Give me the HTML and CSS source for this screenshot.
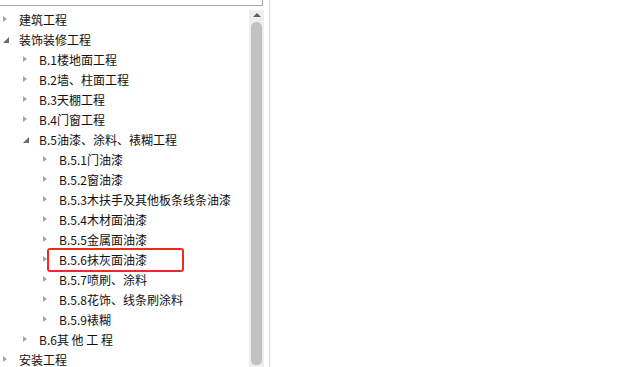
FILE: index.html
```html
<!DOCTYPE html>
<html>
<head>
<meta charset="utf-8">
<link rel="stylesheet" href="styles.css">
</head>
<body>
<div class="page">
  <div class="panel">
    <div class="searchbox"></div>
    <div class="treearea">
      <ul class="tree">
        <li class="row lvl0"><span class="arrow closed"></span><span class="label">建筑工程</span></li>
        <li class="row lvl0"><span class="arrow open"></span><span class="label">装饰装修工程</span></li>
        <li class="row lvl1"><span class="arrow closed"></span><span class="label">B.1楼地面工程</span></li>
        <li class="row lvl1"><span class="arrow closed"></span><span class="label">B.2墙、柱面工程</span></li>
        <li class="row lvl1"><span class="arrow closed"></span><span class="label">B.3天棚工程</span></li>
        <li class="row lvl1"><span class="arrow closed"></span><span class="label">B.4门窗工程</span></li>
        <li class="row lvl1"><span class="arrow open"></span><span class="label">B.5油漆、涂料、裱糊工程</span></li>
        <li class="row lvl2"><span class="arrow closed"></span><span class="label">B.5.1门油漆</span></li>
        <li class="row lvl2"><span class="arrow closed"></span><span class="label">B.5.2窗油漆</span></li>
        <li class="row lvl2"><span class="arrow closed"></span><span class="label">B.5.3木扶手及其他板条线条油漆</span></li>
        <li class="row lvl2"><span class="arrow closed"></span><span class="label">B.5.4木材面油漆</span></li>
        <li class="row lvl2"><span class="arrow closed"></span><span class="label">B.5.5金属面油漆</span></li>
        <li class="row lvl2 marked"><span class="arrow closed"></span><span class="label">B.5.6抹灰面油漆</span></li>
        <li class="row lvl2"><span class="arrow closed"></span><span class="label">B.5.7喷刷、涂料</span></li>
        <li class="row lvl2"><span class="arrow closed"></span><span class="label">B.5.8花饰、线条刷涂料</span></li>
        <li class="row lvl2"><span class="arrow closed"></span><span class="label">B.5.9裱糊</span></li>
        <li class="row lvl1"><span class="arrow closed"></span><span class="label">B.6其 他 工 程</span></li>
        <li class="row lvl0"><span class="arrow closed"></span><span class="label">安装工程</span></li>
      </ul>
      <div class="scrollbar">
        <div class="uparrow"></div>
        <div class="thumb"></div>
      </div>
    </div>
  </div>
  <div class="content"></div>
</div>
</body>
</html>
```
FILE: styles.css
```css
html, body {
  margin: 0;
  padding: 0;
  background: #ffffff;
  overflow: hidden;
}
.page {
  display: flex;
  width: 634px;
  height: 367px;
  font-family: "Noto Sans CJK SC", "Noto Sans", sans-serif;
  font-size: 12px;
  color: #000;
}
.panel {
  width: 269px;
  border-right: 1px solid #d6d6d6;
  display: flex;
  flex-direction: column;
  overflow: hidden;
}
.searchbox {
  width: 262px;
  height: 5px;
  border-right: 1px solid #a9a9a9;
  border-bottom: 1px solid #a9a9a9;
  flex: none;
}
.treearea {
  flex: 1;
  display: flex;
  margin-top: 4px;
  min-height: 0;
}
.tree {
  list-style: none;
  margin: 0;
  padding: 0;
  width: 249px;
  flex: none;
}
.row {
  height: 20px;
  display: flex;
  align-items: center;
  position: relative;
  white-space: nowrap;
}
.lvl0 { padding-left: 3px; }
.lvl1 { padding-left: 23px; }
.lvl2 { padding-left: 43px; }
.arrow {
  width: 16px;
  height: 20px;
  flex: none;
  position: relative;
}
.arrow.closed::before {
  content: "";
  position: absolute;
  left: 0;
  top: 6px;
  width: 0;
  height: 0;
  border-left: 4px solid #a6a6a6;
  border-top: 3px solid transparent;
  border-bottom: 3px solid transparent;
}
.arrow.open::before {
  content: "";
  position: absolute;
  left: 0;
  top: 7px;
  width: 0;
  height: 0;
  border-bottom: 6px solid #6b6b6b;
  border-left: 6px solid transparent;
}
.label {
  line-height: 20px;
  color: #111;
}
.marked::after {
  content: "";
  position: absolute;
  left: 47px;
  top: -2px;
  width: 133px;
  height: 20px;
  border: 2px solid #ee2a24;
  border-radius: 3px;
}
.scrollbar {
  width: 15px;
  flex: none;
  background: #eeeeee;
  position: relative;
  display: flex;
  flex-direction: column;
  align-items: center;
}
.uparrow {
  margin-top: 3px;
  width: 0;
  height: 0;
  border-bottom: 4px solid #606060;
  border-left: 4px solid transparent;
  border-right: 4px solid transparent;
  flex: none;
}
.thumb {
  margin-top: 5px;
  width: 11px;
  flex: 1;
  margin-bottom: 2px;
  background: #c2c2c2;
  border-radius: 6px 6px 5px 5px;
}
.content {
  flex: 1;
}
```
